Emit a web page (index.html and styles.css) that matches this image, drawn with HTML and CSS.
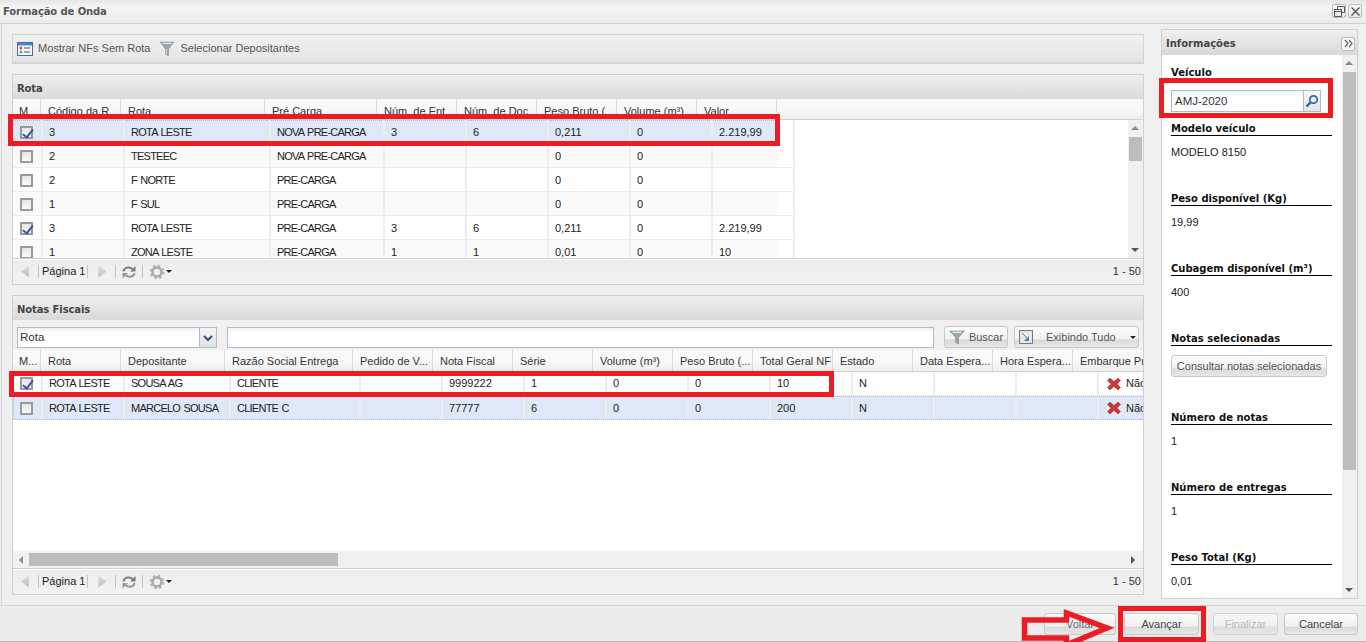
FILE: index.html
```html
<!DOCTYPE html>
<html lang="pt">
<head>
<meta charset="utf-8">
<title>Formação de Onda</title>
<link rel="stylesheet" href="styles.css">
</head>
<body>
<div class="app">
  <header class="titlebar">
    <span class="title">Formação de Onda</span>
    <div class="wintools">
      <button class="wintool"><svg width="11" height="11" viewBox="0 0 11 11"><path d="M3.500 3V.5h7v6H8M.5 3.500h7v7h-7zM.5 5.500h7" fill="none" stroke="#555"/></svg></button>
      <button class="wintool"><svg width="11" height="11" viewBox="0 0 11 11"><path d="M1.500 1.500l8 8M9.500 1.500l-8 8" fill="none" stroke="#555" stroke-width="1.400"/></svg></button>
    </div>
  </header>

  <main class="main">
    <div class="leftcol">
      <div class="toolbar">
        <span class="tool">
          <svg width="16" height="16" viewBox="0 0 16 16"><rect x=".5" y="1.500" width="15" height="13" fill="#f4f7fb" stroke="#4a6c9c"/><rect x="1" y="2" width="14" height="2.500" fill="#4d86c8"/><circle cx="4" cy="7" r="1.500" fill="#d9534f"/><circle cx="4" cy="11" r="1.500" fill="#5cae4f"/><path d="M7 7h6M7 11h6" stroke="#555"/></svg>
          Mostrar NFs Sem Rota
        </span>
        <span class="tool">
          <svg width="16" height="16" viewBox="0 0 16 16"><path d="M1 1h14L9.500 8v7l-3-2V8z" fill="#9aa6ad" stroke="#87939a" stroke-width=".6"/><path d="M3 1.800h10L12 3H4z" fill="#dfe8ec"/><path d="M7 8h1v5l-1-.6z" fill="#cfd6da"/></svg>
          Selecionar Depositantes
        </span>
      </div>

      <section class="panel panel-rota">
        <h2 class="panel-head">Rota</h2>
        <div class="colhead colhead-rota">
          <span>M</span><span>Código da R</span><span>Rota</span><span>Pré Carga</span><span>Núm. de Ent</span><span>Núm. de Doc</span><span>Peso Bruto (</span><span>Volume (m³)</span><span>Valor</span><span></span>
        </div>
        <div class="body-rota">
          <div class="rows-rota">
            <div class="row row-rota sel"><span><i class="cb on"></i></span><span>3</span><span>ROTA LESTE</span><span>NOVA PRE-CARGA</span><span>3</span><span>6</span><span>0,211</span><span>0</span><span>2.219,99</span></div>
            <div class="row row-rota alt"><span><i class="cb"></i></span><span>2</span><span>TESTEEC</span><span>NOVA PRE-CARGA</span><span></span><span></span><span>0</span><span>0</span><span></span></div>
            <div class="row row-rota"><span><i class="cb"></i></span><span>2</span><span>F NORTE</span><span>PRE-CARGA</span><span></span><span></span><span>0</span><span>0</span><span></span></div>
            <div class="row row-rota alt"><span><i class="cb"></i></span><span>1</span><span>F SUL</span><span>PRE-CARGA</span><span></span><span></span><span>0</span><span>0</span><span></span></div>
            <div class="row row-rota"><span><i class="cb on"></i></span><span>3</span><span>ROTA LESTE</span><span>PRE-CARGA</span><span>3</span><span>6</span><span>0,211</span><span>0</span><span>2.219,99</span></div>
            <div class="row row-rota alt"><span><i class="cb"></i></span><span>1</span><span>ZONA LESTE</span><span>PRE-CARGA</span><span>1</span><span>1</span><span>0,01</span><span>0</span><span>10</span></div>
          </div>
          <div class="vscroll">
            <i class="arrow-up"></i>
            <div class="vtrack"><div class="vthumb vthumb-rota"></div></div>
            <i class="arrow-down"></i>
          </div>
        </div>
        <div class="pager">
          <i class="pg-prev"></i><i class="pg-sep"></i><span class="pg-text">Página 1</span><i class="pg-sep"></i><i class="pg-next"></i><i class="pg-sep"></i>
          <svg class="pg-refresh" width="16" height="16" viewBox="0 0 16 16"><path d="M2.500 7.500C3 3.500 8 2 11.500 5" fill="none" stroke="#7a7a7a" stroke-width="2"/><path d="M14.500 2v5.500H9z" fill="#7a7a7a"/><path d="M13.500 9C13 12.500 8 14 4.500 11" fill="none" stroke="#999" stroke-width="2"/><path d="M1.500 14.500V9H7z" fill="#999"/></svg>
          <i class="pg-sep"></i>
          <svg class="pg-gear" width="16" height="16" viewBox="0 0 16 16"><circle cx="8" cy="8" r="4.500" fill="none" stroke="#aaa" stroke-width="2.500"/><circle cx="8" cy="8" r="6.300" fill="none" stroke="#b4b4b4" stroke-width="2" stroke-dasharray="2.500 2.450"/></svg>
          <i class="pg-caret"></i>
          <span class="pg-count">1 - 50</span>
        </div>
      </section>

      <section class="panel panel-notas">
        <h2 class="panel-head">Notas Fiscais</h2>
        <div class="searchbar">
          <div class="combo"><span class="combo-text">Rota</span><span class="combo-btn"><svg width="10" height="6" viewBox="0 0 10 6"><path d="M1 1l4 4 4-4" fill="none" stroke="#2f4f80" stroke-width="2"/></svg></span></div>
          <div class="searchfield"></div>
          <button class="btn btn-buscar"><svg width="16" height="15" viewBox="0 0 16 15"><path d="M.5 1h15L9.500 7.500v6.500l-3-1.500v-5z" fill="#9aa6ad" stroke="#87939a" stroke-width=".6"/><path d="M3 1.800h10L12 3H4z" fill="#eef1f3"/></svg>Buscar</button>
          <button class="btn btn-exibindo"><svg width="14" height="14" viewBox="0 0 14 14"><rect x=".5" y=".5" width="13" height="13" fill="#e4e8ea" stroke="#777"/><path d="M3 3l6 6" stroke="#777"/><path d="M10 6v5H5z" fill="#5a7fb0"/></svg><span class="ex-label">Exibindo Tudo</span><i class="btn-caret"></i></button>
        </div>
        <div class="colhead colhead-notas">
          <span>M...</span><span>Rota</span><span>Depositante</span><span>Razão Social Entrega</span><span>Pedido de V...</span><span>Nota Fiscal</span><span>Série</span><span>Volume (m³)</span><span>Peso Bruto (...</span><span>Total Geral NF</span><span>Estado</span><span>Data Espera...</span><span>Hora Espera...</span><span>Embarque Pr...</span>
        </div>
        <div class="body-notas">
          <div class="row row-notas"><span><i class="cb on"></i></span><span>ROTA LESTE</span><span>SOUSA AG</span><span>CLIENTE</span><span></span><span>9999222</span><span>1</span><span>0</span><span>0</span><span>10</span><span>N</span><span></span><span></span><span class="nao"><svg width="14" height="14" viewBox="0 0 14 14"><path d="M3 1l4 3.500L11 1l2.500 2.500L10 7l3.500 3.500L11 13 7 9.500 3 13 .5 10.500 4 7 .5 3.500z" fill="#c9383a" stroke="#a82a2c" stroke-width=".5"/></svg>Não</span></div>
          <div class="row row-notas sel"><span><i class="cb"></i></span><span>ROTA LESTE</span><span>MARCELO SOUSA</span><span>CLIENTE C</span><span></span><span>77777</span><span>6</span><span>0</span><span>0</span><span>200</span><span>N</span><span></span><span></span><span class="nao"><svg width="14" height="14" viewBox="0 0 14 14"><path d="M3 1l4 3.500L11 1l2.500 2.500L10 7l3.500 3.500L11 13 7 9.500 3 13 .5 10.500 4 7 .5 3.500z" fill="#c9383a" stroke="#a82a2c" stroke-width=".5"/></svg>Não</span></div>
        </div>
        <div class="hscroll">
          <i class="arrow-left"></i>
          <div class="hthumb"></div>
          <i class="arrow-right"></i>
        </div>
        <div class="pager">
          <i class="pg-prev"></i><i class="pg-sep"></i><span class="pg-text">Página 1</span><i class="pg-sep"></i><i class="pg-next"></i><i class="pg-sep"></i>
          <svg class="pg-refresh" width="16" height="16" viewBox="0 0 16 16"><path d="M2.500 7.500C3 3.500 8 2 11.500 5" fill="none" stroke="#7a7a7a" stroke-width="2"/><path d="M14.500 2v5.500H9z" fill="#7a7a7a"/><path d="M13.500 9C13 12.500 8 14 4.500 11" fill="none" stroke="#999" stroke-width="2"/><path d="M1.500 14.500V9H7z" fill="#999"/></svg>
          <i class="pg-sep"></i>
          <svg class="pg-gear" width="16" height="16" viewBox="0 0 16 16"><circle cx="8" cy="8" r="4.500" fill="none" stroke="#aaa" stroke-width="2.500"/><circle cx="8" cy="8" r="6.300" fill="none" stroke="#b4b4b4" stroke-width="2" stroke-dasharray="2.500 2.450"/></svg>
          <i class="pg-caret"></i>
          <span class="pg-count">1 - 50</span>
        </div>
      </section>
    </div>

    <aside class="side">
      <div class="side-head">
        <h2 class="side-title">Informações</h2>
        <button class="collapse"><svg width="9" height="9" viewBox="0 0 9 9"><path d="M1 1l3 3.500L1 8M5 1l3 3.500L5 8" fill="none" stroke="#666" stroke-width="1.200"/></svg></button>
      </div>
      <div class="side-body">
        <div class="side-content">
          <div class="label-plain">Veículo</div>
          <div class="veh-input"><span class="veh-text">AMJ-2020</span><span class="veh-btn"><svg width="14" height="14" viewBox="0 0 14 14"><circle cx="8.500" cy="5.500" r="3.700" fill="#e8f0fa" stroke="#2f62a8" stroke-width="1.700"/><path d="M5.500 8.500L1.500 12.500" stroke="#2f62a8" stroke-width="2.400"/></svg></span></div>
          <div class="info first"><div class="info-label">Modelo veículo</div><div class="info-value">MODELO 8150</div></div>
          <div class="info"><div class="info-label">Peso disponível (Kg)</div><div class="info-value">19,99</div></div>
          <div class="info"><div class="info-label">Cubagem disponível (m³)</div><div class="info-value">400</div></div>
          <div class="info info-tall"><div class="info-label">Notas selecionadas</div><button class="btn btn-consultar">Consultar notas selecionadas</button></div>
          <div class="info"><div class="info-label">Número de notas</div><div class="info-value">1</div></div>
          <div class="info"><div class="info-label">Número de entregas</div><div class="info-value">1</div></div>
          <div class="info"><div class="info-label">Peso Total (Kg)</div><div class="info-value">0,01</div></div>
        </div>
        <div class="vscroll">
          <i class="arrow-up"></i>
          <div class="vtrack"><div class="vthumb vthumb-side"></div></div>
          <i class="arrow-down"></i>
        </div>
      </div>
    </aside>
  </main>

  <footer class="footer">
    <button class="btn foot-btn btn-voltar">Voltar</button>
    <button class="btn foot-btn btn-avancar">Avançar</button>
    <button class="btn foot-btn btn-finalizar disabled">Finalizar</button>
    <button class="btn foot-btn btn-cancelar">Cancelar</button>
  </footer>

  <div class="mark mark-rota"></div>
  <div class="mark mark-notas"></div>
  <div class="mark mark-veiculo"></div>
  <div class="mark mark-avancar"></div>
  <svg class="mark-arrow" width="100" height="42" viewBox="0 0 100 42"><path d="M3.500 20H45.500V13L86 28 45.500 45V38H3.500z" fill="none" stroke="#ed1c24" stroke-width="5.500"/></svg>
</div>
</body>
</html>
```
FILE: styles.css
```css
* { box-sizing: border-box; }
html, body { margin: 0; padding: 0; height: 642px; overflow: hidden; }
body { font: 11px/13px "Liberation Sans", Arial, sans-serif; color: #222; background: #efefef; }
button { font: inherit; padding: 0; margin: 0; }
h2 { margin: 0; font: inherit; }

.app { position: relative; display: flex; flex-direction: column; width: 1366px; height: 642px; overflow: hidden; }

/* title */
.titlebar { flex: 0 0 24px; display: flex; align-items: center; justify-content: space-between; padding: 0 4px 0 3px; background: linear-gradient(#e6e6e6, #f4f4f4 30%, #ececec); border-bottom: 1px solid #d0d0d0; }
.title { font: bold 10px/13px "DejaVu Sans", sans-serif; letter-spacing: -.1px; color: #555; }
.wintools { display: flex; gap: 2px; margin-top: -1px; }
.wintool { width: 14px; height: 14px; display: flex; align-items: center; justify-content: center; background: linear-gradient(#fdfdfd, #e6e6e6); border: 1px solid #b9b9b9; border-radius: 2px; }

/* main */
.main { flex: 1; display: flex; min-height: 0; padding: 5px 4px 0 10px; gap: 17px; margin-left: 1px; border-left: 1px solid #d4d4d4; }
.leftcol { flex: 0 0 1132px; min-width: 0; padding-top: 5px; display: flex; flex-direction: column; gap: 10px; min-height: 0; }

.toolbar { flex: 0 0 30px; display: flex; align-items: center; gap: 9px; padding: 0 0 0 4px; background: linear-gradient(#f0f0f0, #e6e6e6); border: 1px solid #d4d4d4; border-bottom-width: 2px; }
.tool { display: flex; align-items: center; gap: 5px; color: #555; }

/* panels */
.panel { display: flex; flex-direction: column; min-height: 0; min-width: 0; overflow: hidden; border: 1px solid #d0d0d0; background: #fff; }
.panel-rota { flex: 0 0 211px; }
.panel-notas { flex: 0 0 300px; }
.panel-head { flex: 0 0 24px; padding: 7px 0 0 4px; background: linear-gradient(#f0f0f0, #d9d9d9); font: bold 10px/13px "DejaVu Sans", sans-serif; letter-spacing: -.1px; color: #444; }

.colhead { display: grid; background: linear-gradient(#f9f9f9 50%, #eeeeee); border-bottom: 1px solid #d0d0d0; color: #333; overflow: hidden; }
.colhead > span { padding: 2px 0 0 7px; line-height: 20px; white-space: nowrap; overflow: hidden; border-right: 1px solid #dcdcdc; }
.colhead-rota { flex: 0 0 21px; grid-template-columns: 28px 80px 144px 112px 80px 80px 80px 80px 80px 1fr; }
.colhead-notas { flex: 0 0 22px; grid-template-columns: 28px 80px 104px 128px 80px 80px 80px 80px 80px 80px 80px 80px 80px 1fr; }
.colhead-notas > span { padding-top: 1px; line-height: 21px; }
.colhead > span:first-child { padding-left: 6px; }
.colhead > span:last-child { border-right: 0; }

.body-rota { flex: 1; min-height: 0; display: flex; overflow: hidden; }
.rows-rota { flex: 1; min-width: 0; overflow: hidden; }

.row { display: grid; background: #fff; border-bottom: 1px solid #ededed; height: 24px; }
.row > span { display: flex; align-items: center; padding-left: 6px; white-space: pre; overflow: hidden; border-right: 2px solid #ededed; }
.row > span:first-child { padding-left: 7px; }
.row-rota > span:nth-child(3), .row-rota > span:nth-child(4),
.row-notas > span:nth-child(2), .row-notas > span:nth-child(3), .row-notas > span:nth-child(4) { letter-spacing: -.75px; word-spacing: 1px; }
.row-rota { width: 781px; grid-template-columns: 30px 82px 146px 114px 82px 82px 82px 82px 82px; background: linear-gradient(#fff, #fff) no-repeat 0 0 / 764px 100%; border-bottom: 0; box-shadow: inset 0 -1px 0 0 #ededed; }
.row-rota.alt { background: linear-gradient(#fafafa, #fafafa) no-repeat 0 0 / 764px 100%; }
.row-rota.sel { background: repeating-linear-gradient(90deg, #a3bae9 0 1px, transparent 1px 2px) no-repeat 0 0 / 764px 1px, repeating-linear-gradient(90deg, #a3bae9 0 1px, transparent 1px 2px) no-repeat 0 100% / 764px 1px, linear-gradient(#dfe8f6, #dfe8f6) no-repeat 0 0 / 764px 100%; box-shadow: none; }
.row-notas { width: 1167px; grid-template-columns: 30px 82px 106px 130px 82px 82px 82px 82px 82px 82px 82px 82px 82px 82px; }
.row-notas.sel { background: #dfe8f6; border-top: 1px dotted #a3bae9; border-bottom: 1px dotted #a3bae9; border-left: 1px dotted #a3bae9; grid-template-columns: 29px 82px 106px 130px 82px 82px 82px 82px 82px 82px 82px 82px 82px 82px; }
.row-notas.sel > span:first-child { padding-left: 6px; }

.cb { display: block; position: relative; width: 13px; height: 13px; border: 2px solid #9a9a9a; background: linear-gradient(#e4e4e4, #fafafa); }
.cb.on::after { content: ""; position: absolute; left: 3px; top: -1px; width: 4px; height: 9px; border: solid #3b53a8; border-width: 0 2px 2px 0; transform: rotate(38deg); }

/* scrollbars */
.vscroll { flex: 0 0 15px; display: flex; flex-direction: column; align-items: center; background: #f0f0f0; }
.vtrack { flex: 1; width: 13px; min-height: 0; }
.vthumb { width: 13px; background: #bdbdbd; }
.vthumb-rota { height: 24px; }
.vthumb-side { height: 398px; }
.arrow-up, .arrow-down { flex: 0 0 17px; display: block; position: relative; width: 100%; }
.arrow-up::after, .arrow-down::after { content: ""; position: absolute; left: 3px; width: 0; height: 0; border-left: 4px solid transparent; border-right: 4px solid transparent; }
.arrow-up::after { top: 6px; border-bottom: 4px solid #8a8a8a; }
.arrow-down::after { bottom: 6px; border-top: 4px solid #555; }

.body-notas { flex: 1; min-height: 0; overflow: hidden; background: #fff; }
.hscroll { flex: 0 0 17px; display: flex; align-items: center; background: #f0f0f0; }
.arrow-left { flex: 0 0 16px; display: flex; justify-content: center; }
.arrow-left::after { content: ""; border-top: 4px solid transparent; border-bottom: 4px solid transparent; border-right: 4px solid #8a8a8a; }
.hthumb { flex: 0 0 309px; height: 13px; background: #bdbdbd; }
.arrow-right { margin-left: auto; flex: 0 0 20px; display: flex; justify-content: center; }
.arrow-right::after { content: ""; border-top: 4px solid transparent; border-bottom: 4px solid transparent; border-left: 4px solid #555; }

/* pager */
.pager { flex: 0 0 26px; display: flex; align-items: center; padding-left: 8px; border-top: 1px solid #d0d0d0; background: linear-gradient(#ececec, #efefef 40%, #f2f2f2); box-shadow: inset 0 1px 0 #fff; }
.pg-prev, .pg-next { display: block; width: 8px; height: 12px; background: linear-gradient(#dddddd, #bdbdbd); }
.pg-prev { clip-path: polygon(100% 0, 100% 100%, 0 50%); }
.pg-next { clip-path: polygon(0 0, 0 100%, 100% 50%); margin-left: 10px; }
.pg-sep { display: block; width: 1px; height: 13px; background: #c4c4c4; margin-left: 9px; }
.pg-text { padding: 0 2px 0 3px; color: #222; }
.pg-sep + .pg-text + .pg-sep { margin-left: 0; }
.pg-next + .pg-sep { margin-left: 9px; }
.pg-refresh { margin-left: 5px; }
.pg-refresh + .pg-sep { margin-left: 5px; }
.pg-gear { margin-left: 6px; }
.pg-caret { width: 0; height: 0; margin-left: 1px; border-left: 3px solid transparent; border-right: 3px solid transparent; border-top: 3px solid #222; }
.pg-count { margin-left: auto; padding-right: 2px; color: #333; }

/* search row */
.searchbar { flex: 0 0 30px; display: flex; align-items: flex-start; padding: 7px 5px 0 4px; background: #f0f0f0; }
.combo { flex: 0 0 200px; height: 21px; display: flex; background: linear-gradient(#f0f0f0, #fff 25%); border: 1px solid #b3b8cc; }
.combo-text { flex: 1; padding-left: 2px; font-size: 11.5px; line-height: 19px; color: #333; }
.combo-btn { flex: 0 0 17px; display: flex; align-items: center; justify-content: center; border-left: 1px solid #b3b8cc; background: linear-gradient(#f6f6f6, #e2e2e2); }
.searchfield { flex: 0 0 707px; height: 21px; margin-left: 10px; background: linear-gradient(#f2f2f2, #fff 25%); border: 1px solid #b3b8cc; }

.btn { display: flex; align-items: center; justify-content: center; height: 22px; border: 1px solid #c8c8c8; border-radius: 3px; color: #555; background: linear-gradient(#fcfcfc, #f1f1f1 62%, #d9d9d9 63%, #e8e8e8); }
.btn-buscar { flex: 0 0 64px; margin: -1px 0 0 10px; gap: 4px; }
.btn-exibindo { flex: 0 0 125px; margin: -1px 0 0 6px; justify-content: flex-start; padding-left: 4px; }
.ex-label { margin-left: 13px; }
.btn-caret { width: 0; height: 0; margin-left: 14px; border-left: 3px solid transparent; border-right: 3px solid transparent; border-top: 3px solid #222; }

/* side */
.side { flex: 0 0 197px; min-width: 0; display: flex; flex-direction: column; height: 570px; border: 1px solid #d0d0d0; }
.side-head { flex: 0 0 25px; display: flex; align-items: center; justify-content: space-between; padding: 2px 2px 0 4px; background: linear-gradient(#f0f0f0, #d9d9d9); }
.side-title { font: bold 10px/13px "DejaVu Sans", sans-serif; color: #444; }
.collapse { width: 14px; height: 14px; display: flex; align-items: center; justify-content: center; background: #f6f6f6; border: 1px solid #bbb; border-radius: 2px; }
.side-body { flex: 1; min-height: 0; display: flex; background: #fff; }
.side-content { flex: 1; min-width: 0; overflow: hidden; padding: 11px 10px 0 9px; }
.label-plain, .info-label { font: bold 10px/13px "DejaVu Sans", sans-serif; color: #111; }
.veh-input { display: flex; width: 150px; height: 22px; margin-top: 11px; border: 1px solid #b3b8cc; background: linear-gradient(#f2f2f2, #fff 25%); }
.veh-text { flex: 1; padding-left: 3px; font-size: 11.5px; line-height: 20px; color: #333; }
.veh-btn { flex: 0 0 17px; display: flex; align-items: center; justify-content: center; border-left: 1px solid #b3b8cc; background: linear-gradient(#f6f6f6, #e6e6e6); }
.info { height: 70px; }
.info.first { margin-top: 10px; }
.info.info-tall { height: 79px; }
.info-label { height: 13px; border-bottom: 1px solid #000; box-sizing: content-box; }
.info-value { margin-top: 10px; color: #222; }
.btn-consultar { width: 156px; margin-top: 9px; }

/* footer */
.footer { flex: 0 0 37px; display: flex; align-items: flex-start; padding: 7px 8px 0 0; justify-content: flex-end; border-top: 1px solid #d4d4d4; border-bottom: 1px solid #bdbdbd; background: linear-gradient(#ededed, #ebebeb); }
.foot-btn { height: 22px; color: #444; }
.btn-voltar { width: 72px; color: #667; }
.btn-avancar { width: 75px; margin-left: 8px; }
.btn-finalizar { width: 65px; margin-left: 14px; }
.btn-cancelar { width: 74px; margin-left: 6px; }
.disabled { color: #aaa; opacity: .75; }

.nao { gap: 5px; padding-left: 8px !important; }

/* red annotations drawn over the screenshot */
.mark { position: absolute; border: 5px solid #ed1c24; pointer-events: none; }
.mark-rota { left: 8px; top: 114px; width: 772px; height: 32px; }
.mark-notas { left: 9px; top: 371px; width: 825px; height: 26px; }
.mark-veiculo { left: 1159px; top: 78px; width: 174px; height: 40px; }
.mark-avancar { left: 1118px; top: 606px; width: 88px; height: 36px; }
.mark-arrow { position: absolute; left: 1021px; top: 600px; pointer-events: none; }
```
